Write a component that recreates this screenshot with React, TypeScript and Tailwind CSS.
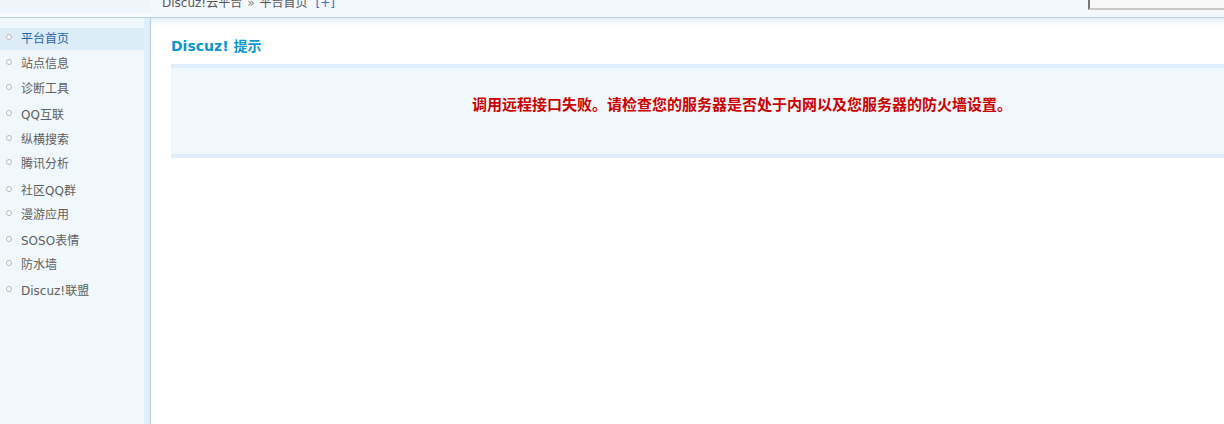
import React from 'react'

// row heights follow the uneven spacing of the original menu
const menu = [
  { label: '平台首页', h: 'h-[25px]' },
  { label: '站点信息', h: 'h-[25px]' },
  { label: '诊断工具', h: 'h-[26px]' },
  { label: 'QQ互联', h: 'h-[25px]' },
  { label: '纵横搜索', h: 'h-[24px]' },
  { label: '腾讯分析', h: 'h-[27px]' },
  { label: '社区QQ群', h: 'h-[24px]' },
  { label: '漫游应用', h: 'h-[26px]' },
  { label: 'SOSO表情', h: 'h-[24px]' },
  { label: '防水墙', h: 'h-[26px]' },
  { label: 'Discuz!联盟', h: 'h-[25px]' },
]

const font = { fontFamily: '"DejaVu Sans", "Noto Sans CJK SC", sans-serif' }

export default function App() {
  return (
    <div className="flex h-[424px] w-[1224px] overflow-hidden bg-white text-[12px]" style={font}>
      {/* sidebar */}
      <div className="flex w-[151px] shrink-0 flex-col">
        <div className="flex h-[18px] shrink-0 flex-col border-b border-[#b9d3de]">
          <div className="h-[13px] bg-[#eef6fb]" />
          <div className="flex-1 bg-[#f7fbfd]" />
        </div>
        <div className="flex flex-1 border-r border-[#b5cfdb]">
          <ul className="w-[144px] bg-[#f1f8fc] pt-[10px]">
            {menu.map((item, i) => (
              <li key={item.label} className={item.h}>
                <div
                  className={`flex h-[22px] items-center pl-[6px] ${
                    i === 0 ? 'bg-[#ddedf8] text-[#1f62a7]' : 'text-[#5e5e5e]'
                  }`}
                >
                  <span className="mr-[9px] mb-[4px] h-[6px] w-[6px] rounded-full border border-[#b8b8b8] bg-white" />
                  <span className="leading-none">{item.label}</span>
                </div>
              </li>
            ))}
          </ul>
          <div className="w-[6px] bg-[#dfeef8]" />
        </div>
      </div>

      {/* main */}
      <div className="flex min-w-0 flex-1 flex-col">
        <div className="flex h-[18px] shrink-0 items-start overflow-hidden border-b border-[#b9d3de] bg-[#f2f8fb]">
          <div className="mt-[-5px] ml-[11px] flex items-center gap-[5px] leading-[16px] text-[#555]">
            <span>Discuz!云平台</span>
            <span className="text-[#888]">»</span>
            <span>平台首页</span>
            <span className="ml-[3px] text-[#3a6fc0]">[+]</span>
          </div>
          <div className="mt-[-4px] ml-auto h-[14px] w-[136px] border-b-2 border-l-2 border-b-[#c8c8c8] border-l-[#777] bg-[#f8f8f8]" />
        </div>
        <div className="h-[8px] shrink-0 bg-gradient-to-b from-[#e4f1f9] to-white" />

        <div className="pl-[20px]">
          <h2 className="mt-[10px] text-[14px] font-bold leading-[20px] text-[#0b97cf]">Discuz! 提示</h2>
          <div className="mt-[8px] flex h-[94px] w-[1142px] justify-center border-y-4 border-[#dfeefa] bg-[#f1f8fc] pt-[27px]">
            <p className="text-[15px] font-bold leading-[20px] text-[#cc0000]">调用远程接口失败。请检查您的服务器是否处于内网以及您服务器的防火墙设置。</p>
          </div>
        </div>
      </div>
    </div>
  )
}
